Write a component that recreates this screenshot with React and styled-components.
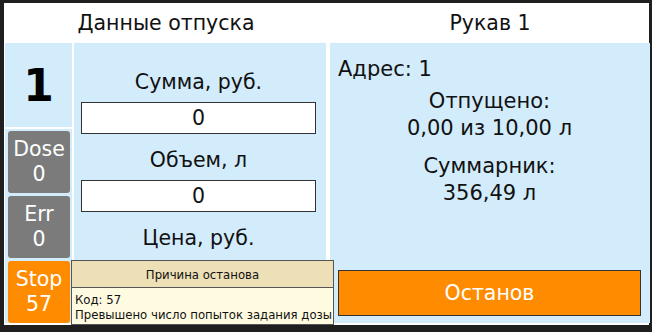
import React from 'react'
import styled, { createGlobalStyle } from 'styled-components'

const GlobalStyle = createGlobalStyle`
    html, body {
        margin: 0;
        padding: 0;
        background: #1f1f1f;
    }
    body {
        font-family: "DejaVu Sans", sans-serif;
    }
`

const Window = styled.div`
    position: relative;
    width: 645px;
    height: 322px;
    margin: 3px 0 0 4px;
    background: #ffffff;
    display: grid;
    grid-template-columns: 322px 320px;
    grid-template-rows: 40px 280px;
    column-gap: 3px;
    padding-bottom: 2px;
    box-sizing: border-box;
    padding-left: 1px;
    color: #111;
`

const Header = styled.div`
    display: flex;
    align-items: center;
    justify-content: center;
    font-size: 20.5px;
`

const LeftPanel = styled.div`
    display: grid;
    grid-template-columns: 67px 252px;
    column-gap: 2px;
`

const SideColumn = styled.div`
    display: flex;
    flex-direction: column;
    gap: 2px;
`

const NumberCell = styled.div`
    height: 84px;
    background: #d3ecfc;
    display: flex;
    align-items: center;
    justify-content: center;
    font-size: 44px;
    font-weight: bold;
    color: #000;
`

const ButtonStack = styled.div`
    flex: 1;
    background: #d3ecfc;
    display: flex;
    flex-direction: column;
    gap: 3px;
    padding: 2px 2px 0 3px;
`

const StateButton = styled.div`
    height: 62px;
    border-radius: 3px;
    background: ${p => p.color};
    color: #fff;
    font-size: 20.5px;
    line-height: 25px;
    display: flex;
    flex-direction: column;
    align-items: center;
    justify-content: center;
`

const FormColumn = styled.div`
    background: #d3ecfc;
    display: flex;
    flex-direction: column;
    padding: 13px 10px 0 7px;
`

const FieldLabel = styled.div`
    font-size: 20.5px;
    line-height: 24px;
    padding: 14px 0 8px;
    text-align: center;
`

const ValueBox = styled.div`
    height: 32px;
    box-sizing: border-box;
    border: 1px solid #333;
    background: #fff;
    font-size: 20.5px;
    display: flex;
    align-items: center;
    justify-content: center;
`

const RightPanel = styled.div`
    background: #d3ecfc;
    display: flex;
    flex-direction: column;
    padding: 14px 9px 7px 8px;
`

const Address = styled.div`
    font-size: 21px;
    line-height: 24px;
`

const InfoBlock = styled.div`
    margin-top: ${p => p.top}px;
    text-align: center;
    font-size: 21px;
    line-height: 27px;
`

const StopAction = styled.div`
    margin-top: auto;
    height: 46px;
    box-sizing: border-box;
    border: 1px solid #333;
    background: #ff8c00;
    color: #fff;
    font-size: 20.5px;
    display: flex;
    align-items: center;
    justify-content: center;
`

const ReasonPopup = styled.div`
    position: absolute;
    left: 67px;
    top: 257px;
    width: 263px;
    height: 65px;
    box-sizing: border-box;
    border: 1px solid #555;
    background: #fffbe1;
    display: flex;
    flex-direction: column;
    font-family: "DejaVu Sans Condensed", "DejaVu Sans", sans-serif;
`

const PopupTitle = styled.div`
    height: 26px;
    background: #ede0b6;
    border-bottom: 1px solid #555;
    display: flex;
    align-items: center;
    justify-content: center;
    font-size: 13px;
`

const PopupBody = styled.div`
    padding: 4px 3px 0;
    font-size: 13px;
    line-height: 15px;
    white-space: nowrap;
`

export default function App() {
    return (
        <>
            <GlobalStyle />
            <Window>
                <Header>Данные отпуска</Header>
                <Header>Рукав 1</Header>
                <LeftPanel>
                    <SideColumn>
                        <NumberCell>1</NumberCell>
                        <ButtonStack>
                            <StateButton color="#7b7b7b"><span>Dose</span><span>0</span></StateButton>
                            <StateButton color="#7b7b7b"><span>Err</span><span>0</span></StateButton>
                            <StateButton color="#ff8c00"><span>Stop</span><span>57</span></StateButton>
                        </ButtonStack>
                    </SideColumn>
                    <FormColumn>
                        <FieldLabel>Сумма, руб.</FieldLabel>
                        <ValueBox>0</ValueBox>
                        <FieldLabel>Объем, л</FieldLabel>
                        <ValueBox>0</ValueBox>
                        <FieldLabel>Цена, руб.</FieldLabel>
                    </FormColumn>
                </LeftPanel>
                <RightPanel>
                    <Address>Адрес: 1</Address>
                    <InfoBlock top={7}>Отпущено:<br />0,00 из 10,00 л</InfoBlock>
                    <InfoBlock top={11}>Суммарник:<br />356,49 л</InfoBlock>
                    <StopAction>Останов</StopAction>
                </RightPanel>
                <ReasonPopup>
                    <PopupTitle>Причина останова</PopupTitle>
                    <PopupBody>Код: 57<br />Превышено число попыток задания дозы</PopupBody>
                </ReasonPopup>
            </Window>
        </>
    )
}
